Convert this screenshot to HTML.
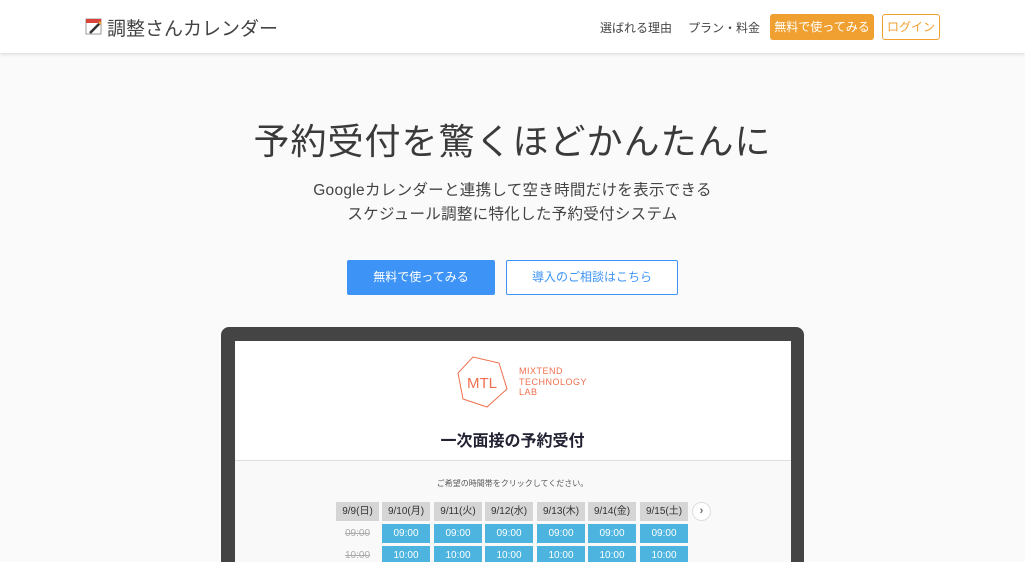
<!DOCTYPE html>
<html><head><meta charset="utf-8"><style>
*{margin:0;padding:0;box-sizing:border-box}
html,body{width:1025px;height:562px;overflow:hidden}
body{background:#fafafa;font-family:"Liberation Sans","Noto Sans CJK JP",sans-serif;position:relative;color:#333}
.hdr{position:absolute;left:0;top:0;width:1025px;height:53px;background:#fff;box-shadow:0 1px 4px rgba(0,0,0,.15)}
.abs{position:absolute}
.nav{font-size:12px;color:#444;top:19px}
.btnO{top:14px;height:26px;border-radius:3px;font-size:12px;line-height:26px;text-align:center}
h1{position:absolute;top:113px;left:0;width:1025px;text-align:center;font-size:36px;font-weight:400;color:#3a3a3a;letter-spacing:1px}
.sub{position:absolute;top:179px;left:0;width:1025px;text-align:center;font-size:15.5px;line-height:24px;color:#444;letter-spacing:.3px}
.cell{position:absolute;width:48px;height:19px;font-size:10px;line-height:19px;text-align:center}
</style></head><body>
<div class="hdr">
 <svg class="abs" style="left:85px;top:17px" width="18" height="19" viewBox="0 0 18 19"><rect x="1" y="2" width="15" height="15" fill="#fff" stroke="#999"/><rect x="1" y="2" width="15" height="4" fill="#d9443a"/><path d="M5 16 L15 6" stroke="#333" stroke-width="2.5"/><path d="M14 5 l2 2" stroke="#e9a23b" stroke-width="2.5"/></svg>
 <div class="abs" style="left:107px;top:14px;font-size:19px;color:#444">調整さんカレンダー</div>
 <div class="abs nav" style="left:600px">選ばれる理由</div>
 <div class="abs nav" style="left:688px">プラン・料金</div>
 <div class="abs btnO" style="left:770px;width:104px;background:#f0a030;color:#fff">無料で使ってみる</div>
 <div class="abs btnO" style="left:882px;width:58px;border:1px solid #f0a030;color:#f0a030;line-height:24px">ログイン</div>
</div>
<h1>予約受付を驚くほどかんたんに</h1>
<div class="sub">Googleカレンダーと連携して空き時間だけを表示できる<br>スケジュール調整に特化した予約受付システム</div>
<div class="abs" style="left:347px;top:260px;width:148px;height:35px;background:#3d94f6;color:#fff;font-size:12px;line-height:35px;text-align:center;border-radius:2px">無料で使ってみる</div>
<div class="abs" style="left:506px;top:260px;width:172px;height:35px;border:1px solid #3d94f6;color:#3d94f6;font-size:12px;line-height:33px;text-align:center;border-radius:2px;background:#fff">導入のご相談はこちら</div>
<div class="abs" style="left:221px;top:327px;width:583px;height:260px;background:#444;border-radius:8px"></div>
<div class="abs" style="left:235px;top:341px;width:556px;height:230px;background:#f9f9f9"></div>
<div class="abs" style="left:235px;top:341px;width:556px;height:120px;background:#fff;border-bottom:1px solid #ddd"></div>
<svg class="abs" style="left:455px;top:355px" width="60" height="56" viewBox="0 0 60 56"><polygon points="18,2 44,8 52,34 32,52 8,44 3,18" fill="none" stroke="#f07050" stroke-width="1"/><text x="27" y="33" font-size="15" fill="#f07050" text-anchor="middle" font-family="Liberation Sans">MTL</text></svg>
<div class="abs" style="left:519px;top:366px;font-size:9px;line-height:10.5px;color:#f07050;letter-spacing:.5px">MIXTEND<br>TECHNOLOGY<br>LAB</div>
<div class="abs" style="left:0;width:1025px;top:427px;text-align:center;font-size:16px;font-weight:700;color:#223">一次面接の予約受付</div>
<div class="abs" style="left:0;width:1025px;top:478px;text-align:center;font-size:8px;color:#555">ご希望の時間帯をクリックしてください。</div>
<div class="cell" style="left:336px;top:502px;width:43px;background:#d5d5d5">9/9(日)</div>
<div class="cell" style="left:382px;top:502px;background:#d5d5d5">9/10(月)</div>
<div class="cell" style="left:434px;top:502px;background:#d5d5d5">9/11(火)</div>
<div class="cell" style="left:485px;top:502px;background:#d5d5d5">9/12(水)</div>
<div class="cell" style="left:537px;top:502px;background:#d5d5d5">9/13(木)</div>
<div class="cell" style="left:588px;top:502px;background:#d5d5d5">9/14(金)</div>
<div class="cell" style="left:640px;top:502px;background:#d5d5d5">9/15(土)</div>
<div class="abs" style="left:692px;top:502px;width:19px;height:19px;border-radius:50%;background:#fff;border:1px solid #ddd;font-size:11px;font-weight:700;line-height:16px;text-align:center;color:#666">›</div>
<div class="cell" style="left:336px;top:524px;width:43px;color:#aaa;text-decoration:line-through">09:00</div>
<div class="cell" style="left:336px;top:546px;width:43px;color:#aaa;text-decoration:line-through">10:00</div>
<div class="cell" style="left:382px;top:524px;background:#4cb4de;color:#fff">09:00</div>
<div class="cell" style="left:434px;top:524px;background:#4cb4de;color:#fff">09:00</div>
<div class="cell" style="left:485px;top:524px;background:#4cb4de;color:#fff">09:00</div>
<div class="cell" style="left:537px;top:524px;background:#4cb4de;color:#fff">09:00</div>
<div class="cell" style="left:588px;top:524px;background:#4cb4de;color:#fff">09:00</div>
<div class="cell" style="left:640px;top:524px;background:#4cb4de;color:#fff">09:00</div>
<div class="cell" style="left:382px;top:546px;background:#4cb4de;color:#fff">10:00</div>
<div class="cell" style="left:434px;top:546px;background:#4cb4de;color:#fff">10:00</div>
<div class="cell" style="left:485px;top:546px;background:#4cb4de;color:#fff">10:00</div>
<div class="cell" style="left:537px;top:546px;background:#4cb4de;color:#fff">10:00</div>
<div class="cell" style="left:588px;top:546px;background:#4cb4de;color:#fff">10:00</div>
<div class="cell" style="left:640px;top:546px;background:#4cb4de;color:#fff">10:00</div>
</body></html>
